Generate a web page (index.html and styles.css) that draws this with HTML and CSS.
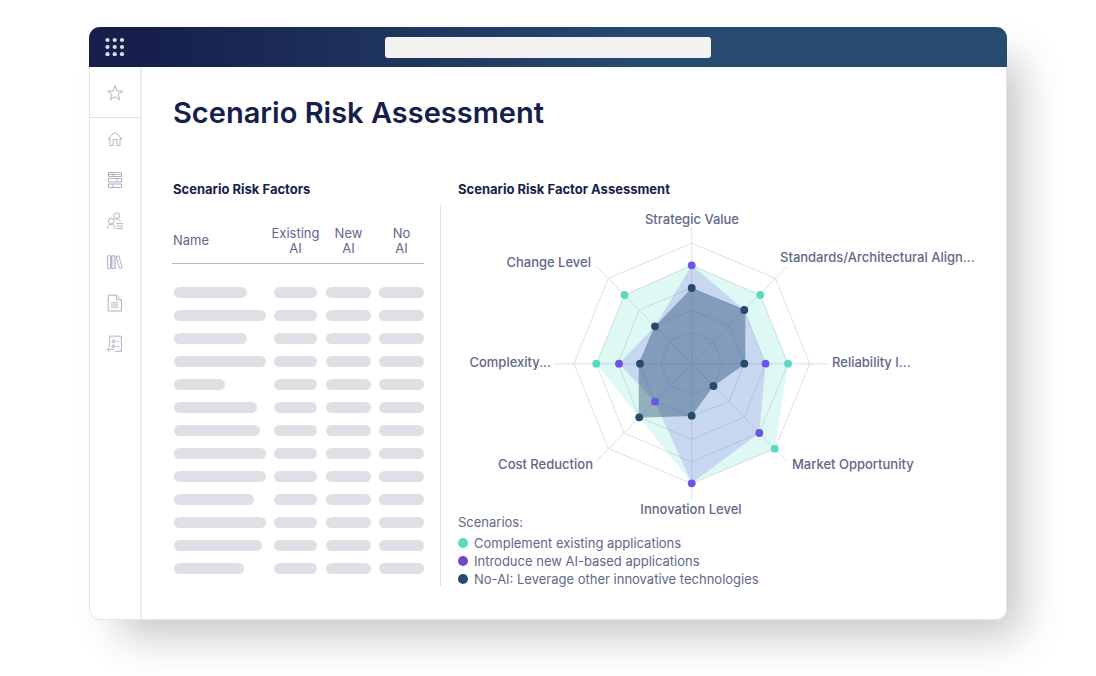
FILE: index.html
```html
<!DOCTYPE html>
<html lang="en">
<head>
<meta charset="utf-8">
<title>Scenario Risk Assessment</title>
<link rel="stylesheet" href="styles.css">
</head>
<body>
<div class="window">
  <header class="topbar">
    <button class="apps" type="button" aria-label="Apps">
      <svg width="20" height="20" viewBox="0 0 20 20" fill="currentColor">
        <circle cx="2.5" cy="3" r="2.1"/><circle cx="9.7" cy="3" r="2.1"/><circle cx="17" cy="3" r="2.1"/>
        <circle cx="2.5" cy="10" r="2.1"/><circle cx="9.7" cy="10" r="2.1"/><circle cx="17" cy="10" r="2.1"/>
        <circle cx="2.5" cy="17.2" r="2.1"/><circle cx="9.7" cy="17.2" r="2.1"/><circle cx="17" cy="17.2" r="2.1"/>
      </svg>
    </button>
    <input class="search" type="search" aria-label="Search">
    <span></span>
  </header>
  <div class="body">
    <nav class="sidebar" aria-label="Main">
      <div class="favorite">
        <a class="nav-link" href="#favorites" aria-label="Favorites"><svg class="icon" viewBox="0 0 18 18"><path d="M9 1.6 10.9 7H16.4L12 10.4 13.7 15.8 9 12.6 4.3 15.8 6 10.4 1.6 7H7.1Z"/></svg></a>
      </div>
      <a class="nav-link" href="#home" aria-label="Home"><svg class="icon" viewBox="0 0 18 18"><path d="M2 9 9 2.2 16 9H14V15.5H11V9.5H7.2V15.5H4V9Z"/></svg></a>
      <a class="nav-link" href="#inventory" aria-label="Inventory"><svg class="icon" viewBox="0 0 18 18"><path d="M2.5 1.5H15.5V5.5H2.5ZM2.5 7.5H15.5V11H2.5ZM2.5 13H15.5V16.5H2.5ZM7 1.5V5.5M11 7.5V11M7 13V16.5M2.5 3.5H15.5"/></svg></a>
      <a class="nav-link" href="#people" aria-label="People"><svg class="icon" viewBox="0 0 18 18"><circle cx="10.7" cy="3.7" r="2.9"/><circle cx="5.2" cy="9.2" r="2.8"/><path d="M1.4 16.5C1.4 13.8 2.8 12.2 5.2 12.2S8.8 13.8 9 16.5M8.2 8.2C9 7.2 9.8 6.8 10.8 6.8 12.9 6.8 14 8 14.3 9.8M10.5 11.6H17M10.5 14H17M10.5 16.4H17"/></svg></a>
      <a class="nav-link" href="#library" aria-label="Library"><svg class="icon" viewBox="0 0 18 18"><path d="M1.6 2.8H4.6V15.5H1.6Z"/><path class="shade" d="M5.6 2.8H9.2V15.5H5.6Z"/><path d="M10.2 3.6 12.8 2.8 16.2 14.6 13.6 15.4Z"/></svg></a>
      <a class="nav-link" href="#reports" aria-label="Reports"><svg class="icon" viewBox="0 0 18 18"><path d="M2.2 1.2H10.6L15.4 5.8V17H2.2ZM10.6 1.2V5.8H15.4M5 8.8H12.4M5 11H12.4M5 13.2H12.4"/></svg></a>
      <a class="nav-link" href="#surveys" aria-label="Surveys"><svg class="icon" viewBox="0 0 18 18"><path d="M3.6 11.5V1.2H15.4V16.4H9M1.2 14.4H7.8M3.6 12 1.2 14.4 3.6 16.8M6.2 5.2H8.6V7.4H6.2ZM6.2 10.2H8.6V12.4H6.2ZM10.2 6.3H12.8M10.2 11.3H12.8"/></svg></a>
    </nav>
    <main class="content">
      <h1 class="title">Scenario Risk Assessment</h1>
      <div class="panels">
        <section class="factors">
          <h2 class="heading">Scenario Risk Factors</h2>
          <div class="factors-body">
            <table class="table">
              <colgroup><col class="col-name"><col class="col-mid"><col class="col-mid"><col class="col-end"></colgroup>
              <thead><tr><th class="name" scope="col">Name</th><th scope="col">Existing AI</th><th scope="col">New<br>AI</th><th class="end" scope="col">No<br>AI</th></tr></thead>
              <tbody id="rows"></tbody>
            </table>
          </div>
        </section>
        <section class="assessment">
          <h2 class="heading">Scenario Risk Factor Assessment</h2>
          <svg class="radar" width="530" height="308" viewBox="458 205 530 308" role="img" aria-label="Radar chart of scenario risk factors">
            <g class="grid">
              <path class="axis" d="M555 363.7H828"/>
              <path d="M691.7 228V499M596.5 266.5 787 461M787 266.5 596.5 461"/>
              <path d="M691.7 332.3 713.7 341.3 722.7 363.7 713.7 386 691.7 394.5 669.7 386 660.7 363.7 669.7 341.3Z"/>
              <path d="M691.7 310.2 729 325.7 744.3 363.7 729 401.7 691.7 416 654.7 401.7 639.3 363.7 654.7 325.7Z"/>
              <path d="M691.7 288 744.3 310 765.5 363.7 744.3 417.3 691.7 439.5 639.2 417.3 618 363.7 639.2 310Z"/>
              <path d="M691.7 265.3 760.3 295 788 363.7 759.3 433 691.7 461.8 624 433 596.3 363.7 624.5 295Z"/>
              <path d="M691.7 243.2 775.4 278.3 809.7 363.7 775 448.7 691.7 483.5 608.3 448.7 574 363.7 608.3 278.3Z"/>
            </g>
            <path class="area teal" d="M691.7 265.3 760.3 295 788 363.7 774.7 448.7 691.7 483.3 639.2 417.3 596.3 363.7 624.5 295Z"/>
            <path class="area violet" d="M691.7 265.3 744.3 310 765.5 363.7 759.3 433 691.7 483.3 655 401.7 619 363.7 655 326.3Z"/>
            <path class="area navy" d="M691.7 288 745.3 310 745.3 363.7 713.5 386 691.7 416 638.7 417.7 638.7 363.7 655 326.3Z"/>
            <g class="teal">
              <circle cx="760.3" cy="295" r="3.9"/><circle cx="788" cy="363.7" r="3.9"/><circle cx="774.7" cy="448.7" r="3.9"/><circle cx="596.3" cy="363.7" r="3.9"/><circle cx="624.5" cy="295" r="3.9"/>
            </g>
            <g class="violet">
              <circle cx="691.7" cy="265.3" r="3.9"/><circle cx="765.5" cy="363.7" r="3.9"/><circle cx="759.3" cy="433" r="3.9"/><circle cx="691.7" cy="483.3" r="3.9"/><circle cx="655" cy="401.7" r="3.9"/><circle cx="619" cy="363.7" r="3.9"/>
            </g>
            <g class="navy">
              <circle cx="691.7" cy="288" r="3.9"/><circle cx="744.3" cy="310" r="3.9"/><circle cx="744.3" cy="363.7" r="3.9"/><circle cx="713.5" cy="386" r="3.9"/><circle cx="691.7" cy="415.7" r="3.9"/><circle cx="639.2" cy="417.3" r="3.9"/><circle cx="640" cy="363.7" r="3.9"/><circle cx="655" cy="326.3" r="3.9"/>
            </g>
            <g class="labels">
              <text class="middle" x="692" y="224">Strategic Value</text>
              <text x="780" y="262">Standards/Architectural Align...</text>
              <text x="832" y="367">Reliability I...</text>
              <text x="792" y="469">Market Opportunity</text>
              <text class="middle" x="691" y="514">Innovation Level</text>
              <text class="right" x="593" y="469">Cost Reduction</text>
              <text class="right" x="551" y="367">Complexity...</text>
              <text class="right" x="591" y="267">Change Level</text>
            </g>
          </svg>
          <div class="legend">
            <p class="legend-title">Scenarios:</p>
            <ul class="legend-list">
              <li><span class="dot dot-teal"></span>Complement existing applications</li>
              <li><span class="dot dot-violet"></span>Introduce new AI-based applications</li>
              <li><span class="dot dot-navy"></span>No-AI: Leverage other innovative technologies</li>
            </ul>
          </div>
        </section>
      </div>
    </main>
  </div>
</div>
<script src="rows.js"></script>
</body>
</html>
```

FILE: rows.js
```js
const widths = [73, 92, 73, 92, 51, 83, 86, 92, 92, 80, 92, 88, 70];
document.getElementById("rows").innerHTML = widths.map(w =>
  `<tr><td class="name"><div class="pill" style="width:${w}px"></div></td>` +
  `<td><div class="pill pill-small"></div></td>` +
  `<td><div class="pill pill-large"></div></td>` +
  `<td class="end"><div class="pill pill-large"></div></td></tr>`).join("");
```

FILE: styles.css
```css
* { box-sizing: border-box; }
body {
  margin: 0;
  padding: 27px 89px 57px;
  min-height: 100vh;
  display: flex;
  background: #fff;
  color: #62678a;
  font: 13px/18px Inter, "Open Sans", sans-serif;
}
.window {
  flex: 1;
  min-width: 0;
  display: flex;
  flex-direction: column;
  background: #fff;
  border-radius: 11px;
  box-shadow: 22px 24px 44px -9px rgba(0, 0, 0, .24);
}
.topbar {
  display: grid;
  grid-template-columns: 1fr 326px 1fr;
  align-items: center;
  height: 40px;
  padding: 0 16px;
  border-radius: 11px 11px 0 0;
  background: linear-gradient(90deg, #161e4b 5%, #264a70 60%);
}
.apps {
  justify-self: start;
  display: flex;
  padding: 0;
  border: 0;
  background: none;
  color: #dcdfe8;
}
.search {
  width: 100%;
  height: 21px;
  border: 0;
  border-radius: 3px;
  padding: 0 8px;
  background: #f3f2f1;
  font: inherit;
}
.body {
  flex: 1;
  display: flex;
  border: 1px solid #e4e4ec;
  border-top: 0;
  border-radius: 0 0 11px 11px;
}
.sidebar {
  width: 52px;
  flex: none;
  border-right: 2px solid #ebebf2;
}
.favorite {
  padding: 5px 0 4px;
  border-bottom: 1px solid #dedee7;
}
.nav-link {
  display: flex;
  align-items: center;
  justify-content: center;
  height: 41px;
  color: #b0b2c4;
}
.icon {
  width: 18px;
  height: 18px;
  fill: none;
  stroke: currentColor;
  stroke-width: 1;
}
.shade { fill: #e8e8ef; }
.content {
  flex: 1;
  min-width: 0;
  padding: 26px 18px 31px 30px;
}
.title {
  margin: 0 0 47px;
  padding-left: 1px;
  color: #161e4b;
  font-size: 29px;
  line-height: 40px;
  font-weight: 600;
}
.panels { display: flex; }
.heading {
  margin: 0;
  padding-bottom: 7px;
  color: #161e4b;
  font-size: 13px;
  line-height: 18px;
  font-weight: 700;
}
.factors { width: 269px; flex: none; }
.factors .heading { padding-left: 1px; }
.factors-body {
  height: 381px;
  padding-top: 20px;
  border-right: 1px solid #dedee5;
}
.table {
  width: 252px;
  table-layout: fixed;
  border-collapse: collapse;
}
.col-name { width: 97px; }
.col-mid { width: 53px; }
.col-end { width: 49px; }
.table th {
  height: 38px;
  padding: 0 0 6px;
  border-bottom: 1px solid #b9bac9;
  font-size: 13px;
  line-height: 15px;
  font-weight: 400;
  text-align: center;
  vertical-align: middle;
}
.table th.name { text-align: left; padding-left: 1px; }
.table td { height: 23px; padding: 0; }
.table td.name { padding-left: 2px; }
.table .end { padding-left: 4px; }
.table tbody::before { content: ""; display: table-row; height: 18px; }
.pill {
  height: 11px;
  margin: 0 auto;
  border-radius: 6px;
  background: #dfe0e6;
}
.name .pill { margin: 0; }
.pill-small { width: 43px; }
.pill-large { width: 45px; }
.assessment { flex: 1; min-width: 0; padding-left: 17px; }
.radar { display: block; max-width: 100%; overflow: visible; }
.grid path { fill: none; stroke: #dfdfe7; }
.grid .axis { stroke: #ebebf1; stroke-width: 2; }
.teal { fill: #5bdac1; }
.violet { fill: #6c54e6; }
.navy { fill: #264a70; }
.area { fill-opacity: .2; }
.area.navy { fill-opacity: .42; }
.labels { fill: #62678a; font-size: 13px; font-weight: 500; }
.middle { text-anchor: middle; }
.right { text-anchor: end; }
.legend-title { margin: 0 0 3px; }
.legend-list { margin: 0; padding: 0; list-style: none; }
.legend-list li { display: flex; align-items: center; gap: 6px; }
.dot { width: 10px; height: 10px; border-radius: 50%; }
.dot-teal { background: #5bdac1; }
.dot-violet { background: #7545c8; }
.dot-navy { background: #264a70; }
```
